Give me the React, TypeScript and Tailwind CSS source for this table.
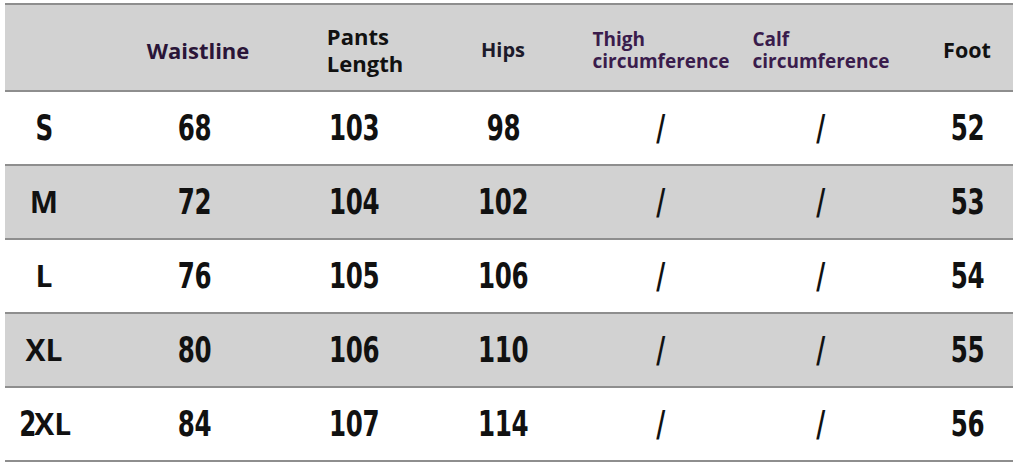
const widths = ["w-[78px]", "w-[230px]", "w-[92px]", "w-[196px]", "w-[120px]", "w-[200px]", "w-[92px]"];

const rows = [
  { size: "S", values: ["68", "103", "98", "/", "/", "52"] },
  { size: "M", values: ["72", "104", "102", "/", "/", "53"] },
  { size: "L", values: ["76", "105", "106", "/", "/", "54"] },
  { size: "XL", values: ["80", "106", "110", "/", "/", "55"] },
  { size: "2XL", values: ["84", "107", "114", "/", "/", "56"] }
];

const digit =
  "inline-block font-['DejaVu_Sans',sans-serif] [font-stretch:condensed] font-bold text-[35px] leading-none tracking-[-0.5px] scale-x-[0.78] text-[#111]";
const letter = "inline-block font-['Open_Sans',sans-serif] font-bold text-[30px] leading-none text-[#111]";

function SizeLabel({ size }: { size: string }) {
  if (size === "S") return <span className={digit}>S</span>;
  if (size === "2XL")
    return (
      <span className="flex items-center">
        <span className={`${digit} -mr-[4px]`}>2</span>
        <span className={letter}>XL</span>
      </span>
    );
  return <span className={letter}>{size}</span>;
}

export default function App() {
  return (
    <div className="w-[1017px] h-[465px] bg-white pt-[3px] pl-[5px]">
      <div className="w-[1008px] border-t-2 border-[#8e8e8e]">
        {/* Header */}
        <div className="flex h-[87px] bg-[#d2d2d2] border-b-2 border-[#8e8e8e] pt-[5px]">
          <div className={`${widths[0]} shrink-0`} />
          <div className={`${widths[1]} shrink-0 flex items-center justify-center`}>
            <span className="font-['Open_Sans',sans-serif] font-bold text-[22px] text-[#2a1538] whitespace-nowrap">Waistline</span>
          </div>
          <div className={`${widths[2]} shrink-0 flex items-center justify-center`}>
            <div className="font-['Open_Sans',sans-serif] font-bold text-[22px] leading-[27px] text-[#111] whitespace-nowrap pl-[12px]">
              <div>Pants</div>
              <div>Length</div>
            </div>
          </div>
          <div className={`${widths[3]} shrink-0 flex items-center justify-center`}>
            <span className="font-['Open_Sans',sans-serif] font-bold text-[20px] text-[#1c1a2a] whitespace-nowrap">Hips</span>
          </div>
          <div className={`${widths[4]} shrink-0 flex items-center justify-center`}>
            <div className="font-['Open_Sans',sans-serif] font-bold text-[19px] leading-[22px] text-[#3a1c4c] whitespace-nowrap">
              <div>Thigh</div>
              <div>circumference</div>
            </div>
          </div>
          <div className={`${widths[5]} shrink-0 flex items-center justify-center`}>
            <div className="font-['Open_Sans',sans-serif] font-bold text-[19px] leading-[22px] text-[#3a1c4c] whitespace-nowrap">
              <div>Calf</div>
              <div>circumference</div>
            </div>
          </div>
          <div className={`${widths[6]} shrink-0 flex items-center justify-center`}>
            <span className="font-['Open_Sans',sans-serif] font-bold text-[21.5px] text-[#111] whitespace-nowrap">Foot</span>
          </div>
        </div>

        {/* Rows */}
        {rows.map((row, i) => (
          <div
            key={row.size}
            className={`flex h-[74px] border-b-2 border-[#8e8e8e] ${i % 2 === 1 ? "bg-[#d2d2d2]" : "bg-white"}`}
          >
            <div className={`${widths[0]} shrink-0 flex items-center justify-center`}>
              <SizeLabel size={row.size} />
            </div>
            {row.values.map((v, j) => (
              <div
                key={j}
                className={`${widths[j + 1]} shrink-0 flex items-center justify-center ${j === 0 ? "pr-[8px]" : ""} ${j === 1 ? "pr-[10px]" : ""}`}
              >
                <span className={`${digit} whitespace-nowrap`}>{v}</span>
              </div>
            ))}
          </div>
        ))}
      </div>
    </div>
  );
}
